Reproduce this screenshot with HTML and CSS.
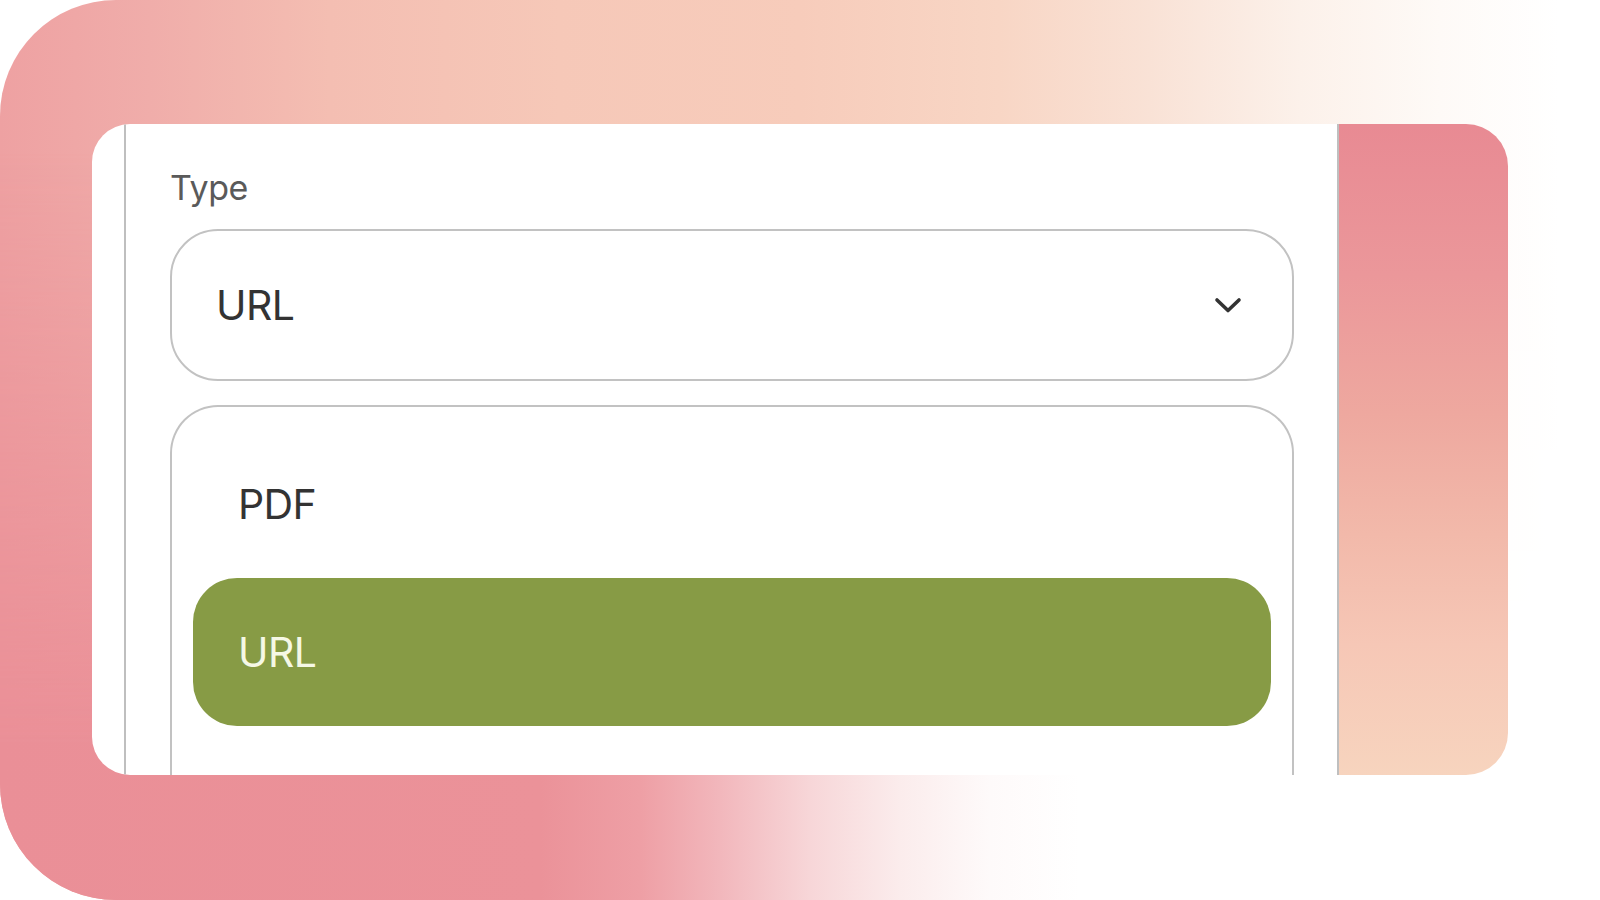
FILE: index.html
```html
<!DOCTYPE html>
<html lang="en">
<head>
<meta charset="utf-8">
<title>Type select</title>
<link rel="stylesheet" href="styles.css">
</head>
<body>
<div class="frame">
  <div class="card">
    <div class="gutter"></div>
    <div class="main">
      <div class="label">Type</div>
      <div class="select">
        <span class="select-value">URL</span>
        <svg class="chevron" width="28" height="18" viewBox="0 0 28 18" aria-hidden="true">
          <polyline points="3,4 14,14.5 25,4" fill="none" stroke="#333333" stroke-width="3.6" stroke-linecap="round" stroke-linejoin="round"/>
        </svg>
      </div>
      <div class="options">
        <div class="option">PDF</div>
        <div class="option selected">URL</div>
      </div>
    </div>
    <div class="side"></div>
  </div>
</div>
</body>
</html>
```

FILE: styles.css
```css
* { box-sizing: border-box; }

html, body {
  margin: 0;
  padding: 0;
  background: #ffffff;
}

body {
  width: 1600px;
  height: 900px;
  overflow: hidden;
  font-family: "Inter", "Noto Sans", "Liberation Sans", sans-serif;
}

.frame {
  position: relative;
  width: 1600px;
  height: 900px;
  border-radius: 116px 0 0 116px;
  overflow: hidden;
  padding: 124px 92px 125px 92px;
  background: linear-gradient(to right,
    #eea1a2 0px,
    #f0adaa 150px,
    #f4beb2 330px,
    #f6c8b8 560px,
    #f7ccbb 800px,
    #f8d6c5 1000px,
    #f9e2d6 1150px,
    #fcf1ea 1300px,
    #fefaf7 1440px,
    #ffffff 1560px);
}

.frame::before {
  content: "";
  position: absolute;
  left: 0;
  right: 0;
  top: 150px;
  bottom: 0;
  background: linear-gradient(to right,
    #ea8f97 0px,
    #eb9299 540px,
    #ee9fa5 640px,
    #f2b7bc 720px,
    #f7d6d8 810px,
    #fbecec 900px,
    #fefafa 990px,
    #ffffff 1080px);
  -webkit-mask-image: linear-gradient(to bottom, transparent 0px, #000 600px);
  mask-image: linear-gradient(to bottom, transparent 0px, #000 600px);
}

.card {
  position: relative;
  z-index: 1;
  display: flex;
  height: 651px;
  background: #ffffff;
  border-radius: 38px 42px 42px 38px;
  overflow: hidden;
}

.gutter {
  width: 34px;
  flex: none;
  border-right: 2px solid #bfbfbf;
}

.main {
  flex: 1;
  min-width: 0;
  padding: 47px 43px 0 44px;
  border-right: 2px solid #bfbfbf;
  overflow: hidden;
}

.label {
  font-size: 34px;
  line-height: 1;
  color: #5a5a5a;
  letter-spacing: -0.4px;
  margin-bottom: 24px;
}

.select {
  display: flex;
  align-items: center;
  justify-content: space-between;
  height: 152px;
  border: 2px solid #c2c2c2;
  border-radius: 48px;
  padding: 0 50px 0 44px;
}

.select-value {
  font-size: 41px;
  line-height: 1;
  color: #333333;
  letter-spacing: -0.6px;
}

.chevron {
  display: block;
  flex: none;
}

.options {
  margin-top: 24px;
  border: 2px solid #c2c2c2;
  border-bottom: none;
  border-radius: 48px 48px 0 0;
  padding: 23px 21px 0 21px;
  height: 420px;
}

.option {
  display: flex;
  align-items: center;
  height: 148px;
  padding-left: 45px;
  border-radius: 44px;
  font-size: 41px;
  line-height: 1;
  color: #333333;
  letter-spacing: -0.6px;
}

.option.selected {
  background: #879b45;
  color: #f5f8e6;
}

.side {
  width: 169px;
  flex: none;
  background: linear-gradient(to bottom,
    #e88a93 0px,
    #eb979a 150px,
    #eea89f 290px,
    #f2b9aa 410px,
    #f6c7b6 520px,
    #f7d4be 651px);
}
```
